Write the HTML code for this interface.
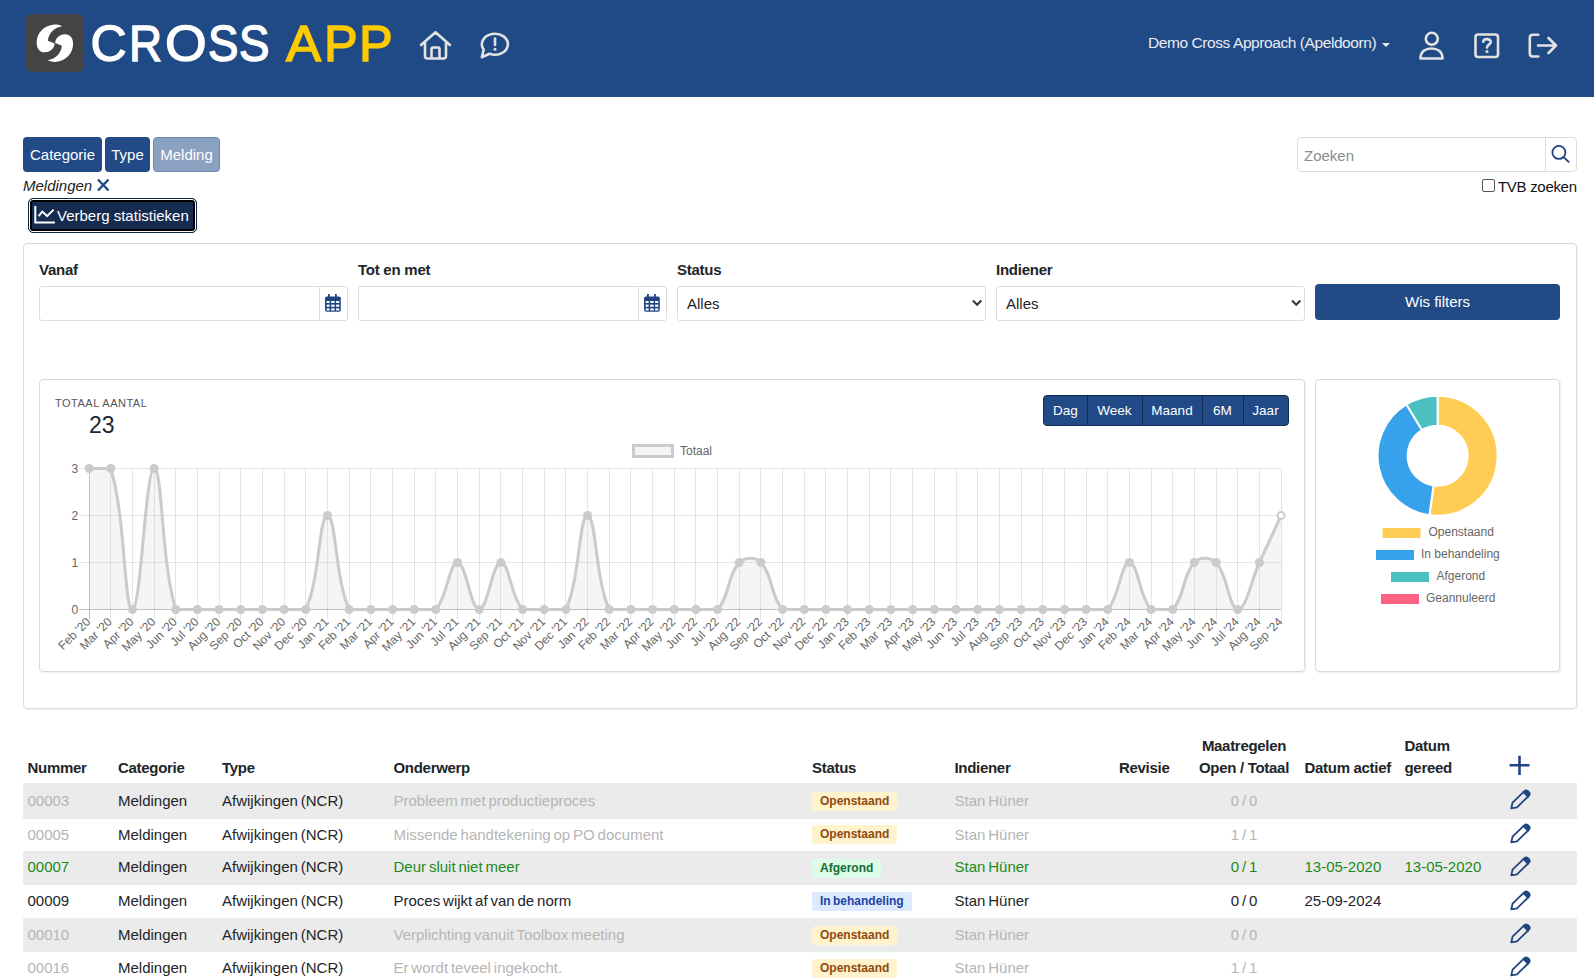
<!DOCTYPE html>
<html><head><meta charset="utf-8">
<style>
*{box-sizing:border-box}
html,body{margin:0;padding:0;width:1594px;height:978px;overflow:hidden;background:#fff;font-family:"Liberation Sans",sans-serif;color:#212529}
.a{position:absolute}
#hdr{left:0;top:0;width:1594px;height:97px;background:#204a85}
#logo{left:26px;top:14px;width:58px;height:58px;background:#444;border-radius:6px}
.brand{top:14px;font-size:50px;line-height:60px;color:#fff;white-space:nowrap;-webkit-text-stroke:1.4px currentColor;transform-origin:0 0}
.hi{stroke:#e2e2e2;fill:none;stroke-width:2.6;stroke-linecap:round;stroke-linejoin:round}
#org{left:1148px;top:33px;letter-spacing:-0.42px;font-size:15.5px;line-height:20px;color:#e8ecf3;white-space:nowrap}
.bc{top:137px;height:35px;border-radius:4px;background:#224a86;color:#fff;font-size:15px;line-height:35px;text-align:center}
#meld{left:23px;top:177px;font-style:italic;font-size:15px;color:#222}
#verberg{left:28px;top:198px;width:169px;height:35px;border-radius:5px;background:#152b4f;border:1px solid #0f2346;box-shadow:inset 0 0 0 1px #fff,inset 0 0 0 3px #000;color:#fff;font-size:15px;line-height:33px}
#search{left:1297px;top:137px;width:280px;height:35px;border:1px solid #dcdcdc;border-radius:4px}
#panel{left:23px;top:243px;width:1554px;height:466px;border:1px solid #dadada;border-radius:4px;box-shadow:1px 1px 2px rgba(0,0,0,0.07)}
.lbl{top:261px;font-size:15px;letter-spacing:-0.25px;font-weight:bold;color:#212529}
.inp{top:286px;height:35px;border:1px solid #dcdcdc;border-radius:3px}
.card{top:379px;height:293px;border:1px solid #dadada;border-radius:4px;box-shadow:1px 1px 2px rgba(0,0,0,0.08)}
#tab{left:23px;top:720px;width:1554px}
.th{font-weight:bold;font-size:15px;letter-spacing:-0.3px;color:#212529;white-space:nowrap}
.row{left:23px;width:1554px}
.td{font-size:15px;white-space:nowrap;word-spacing:-1.3px}
.badge{word-spacing:-1px;font-size:12px;font-weight:bold;height:19px;line-height:19px;border-radius:3px;padding:0 8px}
.b-o{background:#fff3cd;color:#8f4a10}
.b-a{background:#dcfce7;color:#156c3a}
.b-i{background:#dbeafe;color:#1e43a6}
.gray{color:#b5b5b5}
.green{color:#1b8a1b}
.sg{top:0;height:29px;line-height:29px;text-align:center;color:#fff;font-size:13.5px}
</style></head><body>
<div id="hdr" class="a"></div>
<div id="logo" class="a">
<svg width="58" height="58" viewBox="0 0 58 58"><path fill="#fff" d="M36.2,12.2 C33,10.8 30,10.5 28.5,10.6 C17,11.5 10.5,20 10.7,29 C10.8,35 14,38.5 19,38.3 C24.5,38 28.5,34 28.6,29.5 L21.9,26.7 C22.5,19.5 28,13.5 36.2,12.2 Z"/><path fill="#fff" transform="rotate(180 28.9 29.25)" d="M36.2,12.2 C33,10.8 30,10.5 28.5,10.6 C17,11.5 10.5,20 10.7,29 C10.8,35 14,38.5 19,38.3 C24.5,38 28.5,34 28.6,29.5 L21.9,26.7 C22.5,19.5 28,13.5 36.2,12.2 Z"/></svg></div>
<div class="a brand" style="left:90.50px;color:#fff;transform:scaleX(1.000)">C</div><div class="a brand" style="left:129.25px;color:#fff;transform:scaleX(0.916)">R</div><div class="a brand" style="left:164.56px;color:#fff;transform:scaleX(1.071)">O</div><div class="a brand" style="left:207.77px;color:#fff;transform:scaleX(0.913)">S</div><div class="a brand" style="left:239.37px;color:#fff;transform:scaleX(0.913)">S</div><div class="a brand" style="left:286.35px;color:#fecb00;transform:scaleX(1.054)">A</div><div class="a brand" style="left:323.97px;color:#fecb00;transform:scaleX(1.011)">P</div><div class="a brand" style="left:358.97px;color:#fecb00;transform:scaleX(1.011)">P</div>
<svg class="a" style="left:0;top:0" width="1594" height="97">
 <!-- home -->
 <path class="hi" d="M421,45 L435.5,32.3 L450,45 M425,42 V56 Q425,58.5 427.5,58.5 H443.5 Q446,58.5 446,56 V42 M431.5,58.5 V49 Q431.5,47.5 433,47.5 H438 Q439.5,47.5 439.5,49 V58.5"/>
 <!-- chat -->
 <path class="hi" d="M483.7,49.6 A13,10.5 0 1 1 489.5,53.8 L481.8,57.2 Z"/>
 <path class="hi" d="M495,38.5 V45" />
 <circle cx="495" cy="49.3" r="1.5" fill="#e2e2e2"/>
</svg>
<div id="org" class="a">Demo Cross Approach (Apeldoorn)</div>
<svg class="a" style="left:0;top:0" width="1594" height="97">
 <path d="M1382,43 L1390,43 L1386,47 Z" fill="#e8ecf3"/>
 <!-- user -->
 <circle class="hi" cx="1431.8" cy="38.8" r="6"/>
 <path class="hi" d="M1420.5,58.5 C1420.5,51.5 1425.5,48.5 1431.5,48.5 C1437.5,48.5 1442.5,51.5 1442.5,58.5 Z"/>
 <!-- help -->
 <rect class="hi" x="1475.5" y="34.5" width="22.5" height="22.5" rx="2.5"/>
 <path class="hi" d="M1483.3,41.8 C1483.3,38.5 1490.8,38 1490.8,42 C1490.8,44.5 1487,44.8 1487,47.5"/>
 <circle cx="1487" cy="51.5" r="1.5" fill="#e2e2e2"/>
 <!-- logout -->
 <path class="hi" d="M1538.3,34.8 H1532.8 Q1529.8,34.8 1529.8,37.8 V53.5 Q1529.8,56.5 1532.8,56.5 H1538.3 M1538,45.5 H1555.5 M1548.5,38 L1556,45.5 L1548.5,53"/>
</svg>

<div class="a bc" style="left:23px;width:79px">Categorie</div>
<div class="a bc" style="left:105px;width:45px">Type</div>
<div class="a bc" style="left:153px;width:67px;background:#8ba1c1;border:1px solid #6b88b4;line-height:33px">Melding</div>
<div id="meld" class="a">Meldingen</div>
<svg class="a" style="left:96px;top:178px" width="14" height="14"><path d="M2,1.5 L12.5,12.5 M12.5,1.5 L2,12.5" stroke="#224a86" stroke-width="2.4"/></svg>
<div id="verberg" class="a"><svg class="a" style="left:5px;top:7px" width="24" height="20"><path d="M1.3,0 V16.4 H20.9 M4.6,10.1 L8.3,5.6 L13.1,10.1 L19.6,3.6" stroke="#fff" stroke-width="2" fill="none"/></svg><span class="a" style="left:28px;top:0">Verberg statistieken</span></div>

<div id="search" class="a"><span class="a" style="left:6px;top:9px;font-size:15px;color:#8a8a8a">Zoeken</span><div class="a" style="left:247px;top:0;width:1px;height:33px;background:#dcdcdc"></div>
<svg class="a" style="left:253px;top:7px" width="22" height="22"><circle cx="7.9" cy="7.4" r="6.5" stroke="#1f4580" stroke-width="1.8" fill="none"/><path d="M12.6,12.1 L18.2,17.4" stroke="#1f4580" stroke-width="1.9"/></svg></div>
<div class="a" style="left:1482px;top:179px;width:13px;height:13px;border:1px solid #555;border-radius:2px"></div>
<div class="a" style="left:1498px;top:178px;font-size:15px;letter-spacing:-0.3px;color:#111">TVB zoeken</div>

<div id="panel" class="a"></div>
<div class="a lbl" style="left:39px">Vanaf</div>
<div class="a lbl" style="left:358px">Tot en met</div>
<div class="a lbl" style="left:677px">Status</div>
<div class="a lbl" style="left:996px">Indiener</div>
<div class="a inp" style="left:39px;width:309px"><div class="a" style="left:278.5px;top:0;width:1px;height:33px;background:#dcdcdc"></div><svg class="a" style="left:284px;top:6px" width="18" height="20"><rect x="1" y="3.5" width="15.8" height="15.3" rx="1.8" fill="#1f4580"/><rect x="4" y="1" width="1.8" height="4" fill="#1f4580"/><rect x="11" y="1" width="1.8" height="4" fill="#1f4580"/><g fill="#fff"><rect x="2.6" y="8" width="3" height="2"/><rect x="7.2" y="8" width="3.4" height="2"/><rect x="12.1" y="8" width="3.2" height="2"/><rect x="2.6" y="11.6" width="3" height="2.2"/><rect x="7.2" y="11.6" width="3.4" height="2.2"/><rect x="12.1" y="11.6" width="3.2" height="2.2"/><rect x="2.6" y="15.4" width="3" height="2.1"/><rect x="7.2" y="15.4" width="3.4" height="2.1"/><rect x="12.1" y="15.4" width="3.2" height="2.1"/></g></svg></div>
<div class="a inp" style="left:358px;width:309px"><div class="a" style="left:278.5px;top:0;width:1px;height:33px;background:#dcdcdc"></div><svg class="a" style="left:284px;top:6px" width="18" height="20"><rect x="1" y="3.5" width="15.8" height="15.3" rx="1.8" fill="#1f4580"/><rect x="4" y="1" width="1.8" height="4" fill="#1f4580"/><rect x="11" y="1" width="1.8" height="4" fill="#1f4580"/><g fill="#fff"><rect x="2.6" y="8" width="3" height="2"/><rect x="7.2" y="8" width="3.4" height="2"/><rect x="12.1" y="8" width="3.2" height="2"/><rect x="2.6" y="11.6" width="3" height="2.2"/><rect x="7.2" y="11.6" width="3.4" height="2.2"/><rect x="12.1" y="11.6" width="3.2" height="2.2"/><rect x="2.6" y="15.4" width="3" height="2.1"/><rect x="7.2" y="15.4" width="3.4" height="2.1"/><rect x="12.1" y="15.4" width="3.2" height="2.1"/></g></svg></div>
<div class="a inp" style="left:677px;width:309px"><span class="a" style="left:9px;top:8px;font-size:15px;color:#212529">Alles</span><svg class="a" style="left:292px;top:11px" width="14" height="10"><path d="M3,2.5 L7.2,6.8 L11.4,2.5" stroke="#343a40" stroke-width="2" fill="none"/></svg></div>
<div class="a inp" style="left:996px;width:309px"><span class="a" style="left:9px;top:8px;font-size:15px;color:#212529">Alles</span><svg class="a" style="left:292px;top:11px" width="14" height="10"><path d="M3,2.5 L7.2,6.8 L11.4,2.5" stroke="#343a40" stroke-width="2" fill="none"/></svg></div>
<div class="a" style="left:1315px;top:284px;width:245px;height:36px;background:#224a86;border-radius:4px;color:#fff;font-size:15px;line-height:36px;text-align:center">Wis filters</div>

<div class="a card" style="left:39px;width:1266px"></div>
<div class="a card" style="left:1315px;width:245px"></div>
<div class="a" style="left:55px;top:397px;font-size:11px;letter-spacing:0.5px;color:#555">TOTAAL AANTAL</div>
<div class="a" style="left:89px;top:412px;font-size:23px;color:#1e2533">23</div>
<div class="a" style="left:1043px;top:395px;width:246px;height:31px;background:#224a86;border:1px solid #102c55;border-radius:4px;overflow:hidden">
<div class="a" style="left:42.5px;top:0;width:1px;height:29px;background:#102c55"></div>
<div class="a" style="left:97.5px;top:0;width:1px;height:29px;background:#102c55"></div>
<div class="a" style="left:157.5px;top:0;width:1px;height:29px;background:#102c55"></div>
<div class="a" style="left:198.5px;top:0;width:1px;height:29px;background:#102c55"></div>
<span class="a sg" style="left:0;width:43px">Dag</span>
<span class="a sg" style="left:43px;width:55px">Week</span>
<span class="a sg" style="left:98px;width:60px">Maand</span>
<span class="a sg" style="left:158px;width:41px">6M</span>
<span class="a sg" style="left:199px;width:45px">Jaar</span>
</div>
<svg id="lc" width="1594" height="978" style="position:absolute;left:0;top:0">
<line x1="89.5" y1="468.5" x2="89.5" y2="619.5" stroke="rgba(0,0,0,0.25)" stroke-width="1"/>
<line x1="110.5" y1="468.5" x2="110.5" y2="619.5" stroke="rgba(0,0,0,0.1)" stroke-width="1"/>
<line x1="132.5" y1="468.5" x2="132.5" y2="619.5" stroke="rgba(0,0,0,0.1)" stroke-width="1"/>
<line x1="154.5" y1="468.5" x2="154.5" y2="619.5" stroke="rgba(0,0,0,0.1)" stroke-width="1"/>
<line x1="175.5" y1="468.5" x2="175.5" y2="619.5" stroke="rgba(0,0,0,0.1)" stroke-width="1"/>
<line x1="197.5" y1="468.5" x2="197.5" y2="619.5" stroke="rgba(0,0,0,0.1)" stroke-width="1"/>
<line x1="219.5" y1="468.5" x2="219.5" y2="619.5" stroke="rgba(0,0,0,0.1)" stroke-width="1"/>
<line x1="240.5" y1="468.5" x2="240.5" y2="619.5" stroke="rgba(0,0,0,0.1)" stroke-width="1"/>
<line x1="262.5" y1="468.5" x2="262.5" y2="619.5" stroke="rgba(0,0,0,0.1)" stroke-width="1"/>
<line x1="284.5" y1="468.5" x2="284.5" y2="619.5" stroke="rgba(0,0,0,0.1)" stroke-width="1"/>
<line x1="305.5" y1="468.5" x2="305.5" y2="619.5" stroke="rgba(0,0,0,0.1)" stroke-width="1"/>
<line x1="327.5" y1="468.5" x2="327.5" y2="619.5" stroke="rgba(0,0,0,0.1)" stroke-width="1"/>
<line x1="349.5" y1="468.5" x2="349.5" y2="619.5" stroke="rgba(0,0,0,0.1)" stroke-width="1"/>
<line x1="370.5" y1="468.5" x2="370.5" y2="619.5" stroke="rgba(0,0,0,0.1)" stroke-width="1"/>
<line x1="392.5" y1="468.5" x2="392.5" y2="619.5" stroke="rgba(0,0,0,0.1)" stroke-width="1"/>
<line x1="414.5" y1="468.5" x2="414.5" y2="619.5" stroke="rgba(0,0,0,0.1)" stroke-width="1"/>
<line x1="435.5" y1="468.5" x2="435.5" y2="619.5" stroke="rgba(0,0,0,0.1)" stroke-width="1"/>
<line x1="457.5" y1="468.5" x2="457.5" y2="619.5" stroke="rgba(0,0,0,0.1)" stroke-width="1"/>
<line x1="479.5" y1="468.5" x2="479.5" y2="619.5" stroke="rgba(0,0,0,0.1)" stroke-width="1"/>
<line x1="500.5" y1="468.5" x2="500.5" y2="619.5" stroke="rgba(0,0,0,0.1)" stroke-width="1"/>
<line x1="522.5" y1="468.5" x2="522.5" y2="619.5" stroke="rgba(0,0,0,0.1)" stroke-width="1"/>
<line x1="544.5" y1="468.5" x2="544.5" y2="619.5" stroke="rgba(0,0,0,0.1)" stroke-width="1"/>
<line x1="565.5" y1="468.5" x2="565.5" y2="619.5" stroke="rgba(0,0,0,0.1)" stroke-width="1"/>
<line x1="587.5" y1="468.5" x2="587.5" y2="619.5" stroke="rgba(0,0,0,0.1)" stroke-width="1"/>
<line x1="609.5" y1="468.5" x2="609.5" y2="619.5" stroke="rgba(0,0,0,0.1)" stroke-width="1"/>
<line x1="630.5" y1="468.5" x2="630.5" y2="619.5" stroke="rgba(0,0,0,0.1)" stroke-width="1"/>
<line x1="652.5" y1="468.5" x2="652.5" y2="619.5" stroke="rgba(0,0,0,0.1)" stroke-width="1"/>
<line x1="674.5" y1="468.5" x2="674.5" y2="619.5" stroke="rgba(0,0,0,0.1)" stroke-width="1"/>
<line x1="695.5" y1="468.5" x2="695.5" y2="619.5" stroke="rgba(0,0,0,0.1)" stroke-width="1"/>
<line x1="717.5" y1="468.5" x2="717.5" y2="619.5" stroke="rgba(0,0,0,0.1)" stroke-width="1"/>
<line x1="739.5" y1="468.5" x2="739.5" y2="619.5" stroke="rgba(0,0,0,0.1)" stroke-width="1"/>
<line x1="760.5" y1="468.5" x2="760.5" y2="619.5" stroke="rgba(0,0,0,0.1)" stroke-width="1"/>
<line x1="782.5" y1="468.5" x2="782.5" y2="619.5" stroke="rgba(0,0,0,0.1)" stroke-width="1"/>
<line x1="804.5" y1="468.5" x2="804.5" y2="619.5" stroke="rgba(0,0,0,0.1)" stroke-width="1"/>
<line x1="825.5" y1="468.5" x2="825.5" y2="619.5" stroke="rgba(0,0,0,0.1)" stroke-width="1"/>
<line x1="847.5" y1="468.5" x2="847.5" y2="619.5" stroke="rgba(0,0,0,0.1)" stroke-width="1"/>
<line x1="869.5" y1="468.5" x2="869.5" y2="619.5" stroke="rgba(0,0,0,0.1)" stroke-width="1"/>
<line x1="890.5" y1="468.5" x2="890.5" y2="619.5" stroke="rgba(0,0,0,0.1)" stroke-width="1"/>
<line x1="912.5" y1="468.5" x2="912.5" y2="619.5" stroke="rgba(0,0,0,0.1)" stroke-width="1"/>
<line x1="934.5" y1="468.5" x2="934.5" y2="619.5" stroke="rgba(0,0,0,0.1)" stroke-width="1"/>
<line x1="956.5" y1="468.5" x2="956.5" y2="619.5" stroke="rgba(0,0,0,0.1)" stroke-width="1"/>
<line x1="977.5" y1="468.5" x2="977.5" y2="619.5" stroke="rgba(0,0,0,0.1)" stroke-width="1"/>
<line x1="999.5" y1="468.5" x2="999.5" y2="619.5" stroke="rgba(0,0,0,0.1)" stroke-width="1"/>
<line x1="1021.5" y1="468.5" x2="1021.5" y2="619.5" stroke="rgba(0,0,0,0.1)" stroke-width="1"/>
<line x1="1042.5" y1="468.5" x2="1042.5" y2="619.5" stroke="rgba(0,0,0,0.1)" stroke-width="1"/>
<line x1="1064.5" y1="468.5" x2="1064.5" y2="619.5" stroke="rgba(0,0,0,0.1)" stroke-width="1"/>
<line x1="1086.5" y1="468.5" x2="1086.5" y2="619.5" stroke="rgba(0,0,0,0.1)" stroke-width="1"/>
<line x1="1107.5" y1="468.5" x2="1107.5" y2="619.5" stroke="rgba(0,0,0,0.1)" stroke-width="1"/>
<line x1="1129.5" y1="468.5" x2="1129.5" y2="619.5" stroke="rgba(0,0,0,0.1)" stroke-width="1"/>
<line x1="1151.5" y1="468.5" x2="1151.5" y2="619.5" stroke="rgba(0,0,0,0.1)" stroke-width="1"/>
<line x1="1172.5" y1="468.5" x2="1172.5" y2="619.5" stroke="rgba(0,0,0,0.1)" stroke-width="1"/>
<line x1="1194.5" y1="468.5" x2="1194.5" y2="619.5" stroke="rgba(0,0,0,0.1)" stroke-width="1"/>
<line x1="1216.5" y1="468.5" x2="1216.5" y2="619.5" stroke="rgba(0,0,0,0.1)" stroke-width="1"/>
<line x1="1237.5" y1="468.5" x2="1237.5" y2="619.5" stroke="rgba(0,0,0,0.1)" stroke-width="1"/>
<line x1="1259.5" y1="468.5" x2="1259.5" y2="619.5" stroke="rgba(0,0,0,0.1)" stroke-width="1"/>
<line x1="1281.5" y1="468.5" x2="1281.5" y2="619.5" stroke="rgba(0,0,0,0.1)" stroke-width="1"/>
<line x1="79.1" y1="609.5" x2="1281.1" y2="609.5" stroke="rgba(0,0,0,0.25)" stroke-width="1"/>
<line x1="79.1" y1="562.5" x2="1281.1" y2="562.5" stroke="rgba(0,0,0,0.1)" stroke-width="1"/>
<line x1="79.1" y1="515.5" x2="1281.1" y2="515.5" stroke="rgba(0,0,0,0.1)" stroke-width="1"/>
<line x1="79.1" y1="468.5" x2="1281.1" y2="468.5" stroke="rgba(0,0,0,0.1)" stroke-width="1"/>
<path d="M89.10,468.50 C97.77,468.50 108.49,468.50 110.77,468.50 C125.82,517.46 123.78,609.50 132.45,609.50 C141.11,609.50 145.45,468.50 154.12,468.50 C162.79,468.50 160.74,560.54 175.79,609.50 C178.08,609.50 188.79,609.50 197.46,609.50 C206.13,609.50 210.47,609.50 219.14,609.50 C227.81,609.50 232.14,609.50 240.81,609.50 C249.48,609.50 253.81,609.50 262.48,609.50 C271.15,609.50 275.49,609.50 284.15,609.50 C292.82,609.50 302.65,609.50 305.83,609.50 C319.98,578.80 318.83,515.50 327.50,515.50 C336.17,515.50 335.02,578.80 349.17,609.50 C352.35,609.50 362.18,609.50 370.85,609.50 C379.51,609.50 383.85,609.50 392.52,609.50 C401.19,609.50 405.52,609.50 414.19,609.50 C422.86,609.50 430.75,609.50 435.86,609.50 C448.08,596.25 448.87,562.50 457.54,562.50 C466.21,562.50 470.54,609.50 479.21,609.50 C487.88,609.50 492.21,562.50 500.88,562.50 C509.55,562.50 510.33,596.25 522.55,609.50 C527.67,609.50 535.56,609.50 544.23,609.50 C552.90,609.50 562.72,609.50 565.90,609.50 C580.06,578.80 578.90,515.50 587.57,515.50 C596.24,515.50 595.09,578.80 609.25,609.50 C612.43,609.50 622.25,609.50 630.92,609.50 C639.59,609.50 643.92,609.50 652.59,609.50 C661.26,609.50 665.59,609.50 674.26,609.50 C682.93,609.50 687.27,609.50 695.94,609.50 C704.61,609.50 712.49,609.50 717.61,609.50 C729.83,596.25 727.06,575.75 739.28,562.50 C744.40,556.95 755.84,556.95 760.95,562.50 C773.18,575.75 770.41,596.25 782.63,609.50 C787.74,609.50 795.63,609.50 804.30,609.50 C812.97,609.50 817.30,609.50 825.97,609.50 C834.64,609.50 838.98,609.50 847.65,609.50 C856.31,609.50 860.65,609.50 869.32,609.50 C877.99,609.50 882.32,609.50 890.99,609.50 C899.66,609.50 903.99,609.50 912.66,609.50 C921.33,609.50 925.67,609.50 934.34,609.50 C943.01,609.50 947.34,609.50 956.01,609.50 C964.68,609.50 969.01,609.50 977.68,609.50 C986.35,609.50 990.69,609.50 999.35,609.50 C1008.02,609.50 1012.36,609.50 1021.03,609.50 C1029.70,609.50 1034.03,609.50 1042.70,609.50 C1051.37,609.50 1055.70,609.50 1064.37,609.50 C1073.04,609.50 1077.38,609.50 1086.05,609.50 C1094.71,609.50 1102.60,609.50 1107.72,609.50 C1119.94,596.25 1120.72,562.50 1129.39,562.50 C1138.06,562.50 1138.84,596.25 1151.06,609.50 C1156.18,609.50 1167.62,609.50 1172.74,609.50 C1184.96,596.25 1182.19,575.75 1194.41,562.50 C1199.53,556.95 1210.96,556.95 1216.08,562.50 C1228.30,575.75 1229.09,609.50 1237.75,609.50 C1246.42,609.50 1250.76,581.30 1259.43,562.50 C1268.10,543.70 1272.43,534.30 1281.10,515.50 L1281.10,609.5 L89.10,609.5 Z" fill="rgba(201,203,207,0.2)"/>
<path d="M89.10,468.50 C97.77,468.50 108.49,468.50 110.77,468.50 C125.82,517.46 123.78,609.50 132.45,609.50 C141.11,609.50 145.45,468.50 154.12,468.50 C162.79,468.50 160.74,560.54 175.79,609.50 C178.08,609.50 188.79,609.50 197.46,609.50 C206.13,609.50 210.47,609.50 219.14,609.50 C227.81,609.50 232.14,609.50 240.81,609.50 C249.48,609.50 253.81,609.50 262.48,609.50 C271.15,609.50 275.49,609.50 284.15,609.50 C292.82,609.50 302.65,609.50 305.83,609.50 C319.98,578.80 318.83,515.50 327.50,515.50 C336.17,515.50 335.02,578.80 349.17,609.50 C352.35,609.50 362.18,609.50 370.85,609.50 C379.51,609.50 383.85,609.50 392.52,609.50 C401.19,609.50 405.52,609.50 414.19,609.50 C422.86,609.50 430.75,609.50 435.86,609.50 C448.08,596.25 448.87,562.50 457.54,562.50 C466.21,562.50 470.54,609.50 479.21,609.50 C487.88,609.50 492.21,562.50 500.88,562.50 C509.55,562.50 510.33,596.25 522.55,609.50 C527.67,609.50 535.56,609.50 544.23,609.50 C552.90,609.50 562.72,609.50 565.90,609.50 C580.06,578.80 578.90,515.50 587.57,515.50 C596.24,515.50 595.09,578.80 609.25,609.50 C612.43,609.50 622.25,609.50 630.92,609.50 C639.59,609.50 643.92,609.50 652.59,609.50 C661.26,609.50 665.59,609.50 674.26,609.50 C682.93,609.50 687.27,609.50 695.94,609.50 C704.61,609.50 712.49,609.50 717.61,609.50 C729.83,596.25 727.06,575.75 739.28,562.50 C744.40,556.95 755.84,556.95 760.95,562.50 C773.18,575.75 770.41,596.25 782.63,609.50 C787.74,609.50 795.63,609.50 804.30,609.50 C812.97,609.50 817.30,609.50 825.97,609.50 C834.64,609.50 838.98,609.50 847.65,609.50 C856.31,609.50 860.65,609.50 869.32,609.50 C877.99,609.50 882.32,609.50 890.99,609.50 C899.66,609.50 903.99,609.50 912.66,609.50 C921.33,609.50 925.67,609.50 934.34,609.50 C943.01,609.50 947.34,609.50 956.01,609.50 C964.68,609.50 969.01,609.50 977.68,609.50 C986.35,609.50 990.69,609.50 999.35,609.50 C1008.02,609.50 1012.36,609.50 1021.03,609.50 C1029.70,609.50 1034.03,609.50 1042.70,609.50 C1051.37,609.50 1055.70,609.50 1064.37,609.50 C1073.04,609.50 1077.38,609.50 1086.05,609.50 C1094.71,609.50 1102.60,609.50 1107.72,609.50 C1119.94,596.25 1120.72,562.50 1129.39,562.50 C1138.06,562.50 1138.84,596.25 1151.06,609.50 C1156.18,609.50 1167.62,609.50 1172.74,609.50 C1184.96,596.25 1182.19,575.75 1194.41,562.50 C1199.53,556.95 1210.96,556.95 1216.08,562.50 C1228.30,575.75 1229.09,609.50 1237.75,609.50 C1246.42,609.50 1250.76,581.30 1259.43,562.50 C1268.10,543.70 1272.43,534.30 1281.10,515.50" fill="none" stroke="#c9cbcf" stroke-width="3"/>
<circle cx="89.10" cy="468.50" r="4.5" fill="#c9cbcf"/>
<circle cx="110.77" cy="468.50" r="4.5" fill="#c9cbcf"/>
<circle cx="132.45" cy="609.50" r="4.5" fill="#c9cbcf"/>
<circle cx="154.12" cy="468.50" r="4.5" fill="#c9cbcf"/>
<circle cx="175.79" cy="609.50" r="4.5" fill="#c9cbcf"/>
<circle cx="197.46" cy="609.50" r="4.5" fill="#c9cbcf"/>
<circle cx="219.14" cy="609.50" r="4.5" fill="#c9cbcf"/>
<circle cx="240.81" cy="609.50" r="4.5" fill="#c9cbcf"/>
<circle cx="262.48" cy="609.50" r="4.5" fill="#c9cbcf"/>
<circle cx="284.15" cy="609.50" r="4.5" fill="#c9cbcf"/>
<circle cx="305.83" cy="609.50" r="4.5" fill="#c9cbcf"/>
<circle cx="327.50" cy="515.50" r="4.5" fill="#c9cbcf"/>
<circle cx="349.17" cy="609.50" r="4.5" fill="#c9cbcf"/>
<circle cx="370.85" cy="609.50" r="4.5" fill="#c9cbcf"/>
<circle cx="392.52" cy="609.50" r="4.5" fill="#c9cbcf"/>
<circle cx="414.19" cy="609.50" r="4.5" fill="#c9cbcf"/>
<circle cx="435.86" cy="609.50" r="4.5" fill="#c9cbcf"/>
<circle cx="457.54" cy="562.50" r="4.5" fill="#c9cbcf"/>
<circle cx="479.21" cy="609.50" r="4.5" fill="#c9cbcf"/>
<circle cx="500.88" cy="562.50" r="4.5" fill="#c9cbcf"/>
<circle cx="522.55" cy="609.50" r="4.5" fill="#c9cbcf"/>
<circle cx="544.23" cy="609.50" r="4.5" fill="#c9cbcf"/>
<circle cx="565.90" cy="609.50" r="4.5" fill="#c9cbcf"/>
<circle cx="587.57" cy="515.50" r="4.5" fill="#c9cbcf"/>
<circle cx="609.25" cy="609.50" r="4.5" fill="#c9cbcf"/>
<circle cx="630.92" cy="609.50" r="4.5" fill="#c9cbcf"/>
<circle cx="652.59" cy="609.50" r="4.5" fill="#c9cbcf"/>
<circle cx="674.26" cy="609.50" r="4.5" fill="#c9cbcf"/>
<circle cx="695.94" cy="609.50" r="4.5" fill="#c9cbcf"/>
<circle cx="717.61" cy="609.50" r="4.5" fill="#c9cbcf"/>
<circle cx="739.28" cy="562.50" r="4.5" fill="#c9cbcf"/>
<circle cx="760.95" cy="562.50" r="4.5" fill="#c9cbcf"/>
<circle cx="782.63" cy="609.50" r="4.5" fill="#c9cbcf"/>
<circle cx="804.30" cy="609.50" r="4.5" fill="#c9cbcf"/>
<circle cx="825.97" cy="609.50" r="4.5" fill="#c9cbcf"/>
<circle cx="847.65" cy="609.50" r="4.5" fill="#c9cbcf"/>
<circle cx="869.32" cy="609.50" r="4.5" fill="#c9cbcf"/>
<circle cx="890.99" cy="609.50" r="4.5" fill="#c9cbcf"/>
<circle cx="912.66" cy="609.50" r="4.5" fill="#c9cbcf"/>
<circle cx="934.34" cy="609.50" r="4.5" fill="#c9cbcf"/>
<circle cx="956.01" cy="609.50" r="4.5" fill="#c9cbcf"/>
<circle cx="977.68" cy="609.50" r="4.5" fill="#c9cbcf"/>
<circle cx="999.35" cy="609.50" r="4.5" fill="#c9cbcf"/>
<circle cx="1021.03" cy="609.50" r="4.5" fill="#c9cbcf"/>
<circle cx="1042.70" cy="609.50" r="4.5" fill="#c9cbcf"/>
<circle cx="1064.37" cy="609.50" r="4.5" fill="#c9cbcf"/>
<circle cx="1086.05" cy="609.50" r="4.5" fill="#c9cbcf"/>
<circle cx="1107.72" cy="609.50" r="4.5" fill="#c9cbcf"/>
<circle cx="1129.39" cy="562.50" r="4.5" fill="#c9cbcf"/>
<circle cx="1151.06" cy="609.50" r="4.5" fill="#c9cbcf"/>
<circle cx="1172.74" cy="609.50" r="4.5" fill="#c9cbcf"/>
<circle cx="1194.41" cy="562.50" r="4.5" fill="#c9cbcf"/>
<circle cx="1216.08" cy="562.50" r="4.5" fill="#c9cbcf"/>
<circle cx="1237.75" cy="609.50" r="4.5" fill="#c9cbcf"/>
<circle cx="1259.43" cy="562.50" r="4.5" fill="#c9cbcf"/>
<circle cx="1281.10" cy="515.50" r="3.5" fill="#fff" stroke="#c9cbcf" stroke-width="2"/>
<text x="78.1" y="614.0" text-anchor="end" font-family="Liberation Sans" font-size="12" fill="#666">0</text>
<text x="78.1" y="567.0" text-anchor="end" font-family="Liberation Sans" font-size="12" fill="#666">1</text>
<text x="78.1" y="520.0" text-anchor="end" font-family="Liberation Sans" font-size="12" fill="#666">2</text>
<text x="78.1" y="473.0" text-anchor="end" font-family="Liberation Sans" font-size="12" fill="#666">3</text>
<text transform="translate(91.10,622.5) rotate(-45)" text-anchor="end" font-family="Liberation Sans" font-size="12" fill="#666">Feb &#39;20</text>
<text transform="translate(112.77,622.5) rotate(-45)" text-anchor="end" font-family="Liberation Sans" font-size="12" fill="#666">Mar &#39;20</text>
<text transform="translate(134.45,622.5) rotate(-45)" text-anchor="end" font-family="Liberation Sans" font-size="12" fill="#666">Apr &#39;20</text>
<text transform="translate(156.12,622.5) rotate(-45)" text-anchor="end" font-family="Liberation Sans" font-size="12" fill="#666">May &#39;20</text>
<text transform="translate(177.79,622.5) rotate(-45)" text-anchor="end" font-family="Liberation Sans" font-size="12" fill="#666">Jun &#39;20</text>
<text transform="translate(199.46,622.5) rotate(-45)" text-anchor="end" font-family="Liberation Sans" font-size="12" fill="#666">Jul &#39;20</text>
<text transform="translate(221.14,622.5) rotate(-45)" text-anchor="end" font-family="Liberation Sans" font-size="12" fill="#666">Aug &#39;20</text>
<text transform="translate(242.81,622.5) rotate(-45)" text-anchor="end" font-family="Liberation Sans" font-size="12" fill="#666">Sep &#39;20</text>
<text transform="translate(264.48,622.5) rotate(-45)" text-anchor="end" font-family="Liberation Sans" font-size="12" fill="#666">Oct &#39;20</text>
<text transform="translate(286.15,622.5) rotate(-45)" text-anchor="end" font-family="Liberation Sans" font-size="12" fill="#666">Nov &#39;20</text>
<text transform="translate(307.83,622.5) rotate(-45)" text-anchor="end" font-family="Liberation Sans" font-size="12" fill="#666">Dec &#39;20</text>
<text transform="translate(329.50,622.5) rotate(-45)" text-anchor="end" font-family="Liberation Sans" font-size="12" fill="#666">Jan &#39;21</text>
<text transform="translate(351.17,622.5) rotate(-45)" text-anchor="end" font-family="Liberation Sans" font-size="12" fill="#666">Feb &#39;21</text>
<text transform="translate(372.85,622.5) rotate(-45)" text-anchor="end" font-family="Liberation Sans" font-size="12" fill="#666">Mar &#39;21</text>
<text transform="translate(394.52,622.5) rotate(-45)" text-anchor="end" font-family="Liberation Sans" font-size="12" fill="#666">Apr &#39;21</text>
<text transform="translate(416.19,622.5) rotate(-45)" text-anchor="end" font-family="Liberation Sans" font-size="12" fill="#666">May &#39;21</text>
<text transform="translate(437.86,622.5) rotate(-45)" text-anchor="end" font-family="Liberation Sans" font-size="12" fill="#666">Jun &#39;21</text>
<text transform="translate(459.54,622.5) rotate(-45)" text-anchor="end" font-family="Liberation Sans" font-size="12" fill="#666">Jul &#39;21</text>
<text transform="translate(481.21,622.5) rotate(-45)" text-anchor="end" font-family="Liberation Sans" font-size="12" fill="#666">Aug &#39;21</text>
<text transform="translate(502.88,622.5) rotate(-45)" text-anchor="end" font-family="Liberation Sans" font-size="12" fill="#666">Sep &#39;21</text>
<text transform="translate(524.55,622.5) rotate(-45)" text-anchor="end" font-family="Liberation Sans" font-size="12" fill="#666">Oct &#39;21</text>
<text transform="translate(546.23,622.5) rotate(-45)" text-anchor="end" font-family="Liberation Sans" font-size="12" fill="#666">Nov &#39;21</text>
<text transform="translate(567.90,622.5) rotate(-45)" text-anchor="end" font-family="Liberation Sans" font-size="12" fill="#666">Dec &#39;21</text>
<text transform="translate(589.57,622.5) rotate(-45)" text-anchor="end" font-family="Liberation Sans" font-size="12" fill="#666">Jan &#39;22</text>
<text transform="translate(611.25,622.5) rotate(-45)" text-anchor="end" font-family="Liberation Sans" font-size="12" fill="#666">Feb &#39;22</text>
<text transform="translate(632.92,622.5) rotate(-45)" text-anchor="end" font-family="Liberation Sans" font-size="12" fill="#666">Mar &#39;22</text>
<text transform="translate(654.59,622.5) rotate(-45)" text-anchor="end" font-family="Liberation Sans" font-size="12" fill="#666">Apr &#39;22</text>
<text transform="translate(676.26,622.5) rotate(-45)" text-anchor="end" font-family="Liberation Sans" font-size="12" fill="#666">May &#39;22</text>
<text transform="translate(697.94,622.5) rotate(-45)" text-anchor="end" font-family="Liberation Sans" font-size="12" fill="#666">Jun &#39;22</text>
<text transform="translate(719.61,622.5) rotate(-45)" text-anchor="end" font-family="Liberation Sans" font-size="12" fill="#666">Jul &#39;22</text>
<text transform="translate(741.28,622.5) rotate(-45)" text-anchor="end" font-family="Liberation Sans" font-size="12" fill="#666">Aug &#39;22</text>
<text transform="translate(762.95,622.5) rotate(-45)" text-anchor="end" font-family="Liberation Sans" font-size="12" fill="#666">Sep &#39;22</text>
<text transform="translate(784.63,622.5) rotate(-45)" text-anchor="end" font-family="Liberation Sans" font-size="12" fill="#666">Oct &#39;22</text>
<text transform="translate(806.30,622.5) rotate(-45)" text-anchor="end" font-family="Liberation Sans" font-size="12" fill="#666">Nov &#39;22</text>
<text transform="translate(827.97,622.5) rotate(-45)" text-anchor="end" font-family="Liberation Sans" font-size="12" fill="#666">Dec &#39;22</text>
<text transform="translate(849.65,622.5) rotate(-45)" text-anchor="end" font-family="Liberation Sans" font-size="12" fill="#666">Jan &#39;23</text>
<text transform="translate(871.32,622.5) rotate(-45)" text-anchor="end" font-family="Liberation Sans" font-size="12" fill="#666">Feb &#39;23</text>
<text transform="translate(892.99,622.5) rotate(-45)" text-anchor="end" font-family="Liberation Sans" font-size="12" fill="#666">Mar &#39;23</text>
<text transform="translate(914.66,622.5) rotate(-45)" text-anchor="end" font-family="Liberation Sans" font-size="12" fill="#666">Apr &#39;23</text>
<text transform="translate(936.34,622.5) rotate(-45)" text-anchor="end" font-family="Liberation Sans" font-size="12" fill="#666">May &#39;23</text>
<text transform="translate(958.01,622.5) rotate(-45)" text-anchor="end" font-family="Liberation Sans" font-size="12" fill="#666">Jun &#39;23</text>
<text transform="translate(979.68,622.5) rotate(-45)" text-anchor="end" font-family="Liberation Sans" font-size="12" fill="#666">Jul &#39;23</text>
<text transform="translate(1001.35,622.5) rotate(-45)" text-anchor="end" font-family="Liberation Sans" font-size="12" fill="#666">Aug &#39;23</text>
<text transform="translate(1023.03,622.5) rotate(-45)" text-anchor="end" font-family="Liberation Sans" font-size="12" fill="#666">Sep &#39;23</text>
<text transform="translate(1044.70,622.5) rotate(-45)" text-anchor="end" font-family="Liberation Sans" font-size="12" fill="#666">Oct &#39;23</text>
<text transform="translate(1066.37,622.5) rotate(-45)" text-anchor="end" font-family="Liberation Sans" font-size="12" fill="#666">Nov &#39;23</text>
<text transform="translate(1088.05,622.5) rotate(-45)" text-anchor="end" font-family="Liberation Sans" font-size="12" fill="#666">Dec &#39;23</text>
<text transform="translate(1109.72,622.5) rotate(-45)" text-anchor="end" font-family="Liberation Sans" font-size="12" fill="#666">Jan &#39;24</text>
<text transform="translate(1131.39,622.5) rotate(-45)" text-anchor="end" font-family="Liberation Sans" font-size="12" fill="#666">Feb &#39;24</text>
<text transform="translate(1153.06,622.5) rotate(-45)" text-anchor="end" font-family="Liberation Sans" font-size="12" fill="#666">Mar &#39;24</text>
<text transform="translate(1174.74,622.5) rotate(-45)" text-anchor="end" font-family="Liberation Sans" font-size="12" fill="#666">Apr &#39;24</text>
<text transform="translate(1196.41,622.5) rotate(-45)" text-anchor="end" font-family="Liberation Sans" font-size="12" fill="#666">May &#39;24</text>
<text transform="translate(1218.08,622.5) rotate(-45)" text-anchor="end" font-family="Liberation Sans" font-size="12" fill="#666">Jun &#39;24</text>
<text transform="translate(1239.75,622.5) rotate(-45)" text-anchor="end" font-family="Liberation Sans" font-size="12" fill="#666">Jul &#39;24</text>
<text transform="translate(1261.43,622.5) rotate(-45)" text-anchor="end" font-family="Liberation Sans" font-size="12" fill="#666">Aug &#39;24</text>
<text transform="translate(1283.10,622.5) rotate(-45)" text-anchor="end" font-family="Liberation Sans" font-size="12" fill="#666">Sep &#39;24</text>
<rect x="633.5" y="445.5" width="39" height="11" fill="rgba(201,203,207,0.2)" stroke="#c9cbcf" stroke-width="3"/>
<text x="680" y="455" font-family="Liberation Sans" font-size="12" fill="#666">Totaal</text>
<path d="M1437.60,395.70 A60,60 0 1 1 1429.43,515.14 L1433.52,485.42 A30,30 0 1 0 1437.60,425.70 Z" fill="#ffcd56" stroke="#fff" stroke-width="2"/>
<path d="M1429.43,515.14 A60,60 0 0 1 1406.42,404.43 L1422.01,430.07 A30,30 0 0 0 1433.52,485.42 Z" fill="#36a2eb" stroke="#fff" stroke-width="2"/>
<path d="M1406.42,404.43 A60,60 0 0 1 1437.60,395.70 L1437.60,425.70 A30,30 0 0 0 1422.01,430.07 Z" fill="#4bc0c0" stroke="#fff" stroke-width="2"/>
<rect x="1382.5" y="528" width="38" height="10" fill="#ffcd56"/>
<text x="1428.5" y="536" font-family="Liberation Sans" font-size="12" fill="#666">Openstaand</text>
<rect x="1376" y="550" width="38" height="10" fill="#36a2eb"/>
<text x="1421" y="558" font-family="Liberation Sans" font-size="12" fill="#666">In behandeling</text>
<rect x="1391" y="572" width="38" height="10" fill="#4bc0c0"/>
<text x="1436.5" y="580" font-family="Liberation Sans" font-size="12" fill="#666">Afgerond</text>
<rect x="1381" y="594" width="38" height="10" fill="#ff6384"/>
<text x="1426" y="602" font-family="Liberation Sans" font-size="12" fill="#666">Geannuleerd</text>
</svg>
<div class="a th" style="left:27.5px;top:759px;">Nummer</div>
<div class="a th" style="left:118px;top:759px;">Categorie</div>
<div class="a th" style="left:222px;top:759px;">Type</div>
<div class="a th" style="left:393.5px;top:759px;">Onderwerp</div>
<div class="a th" style="left:812px;top:759px;">Status</div>
<div class="a th" style="left:954.5px;top:759px;">Indiener</div>
<div class="a th" style="left:1119px;top:759px;">Revisie</div>
<div class="a th" style="left:1199px;top:737px;width:90px;text-align:center">Maatregelen</div>
<div class="a th" style="left:1199px;top:759px;width:90px;text-align:center">Open / Totaal</div>
<div class="a th" style="left:1304.5px;top:759px;">Datum actief</div>
<div class="a th" style="left:1404.5px;top:737px;">Datum</div>
<div class="a th" style="left:1404.5px;top:759px;">gereed</div>
<svg class="a" style="left:1505px;top:752px" width="30" height="28"><path d="M4.6,13.3 H24.5 M14.5,3.7 V22.9" stroke="#1f4580" stroke-width="2.6"/></svg>
<div class="a row" style="top:783px;height:36px;background:#ebebeb"></div>
<div class="a td gray" style="left:27.5px;top:792px;">00003</div>
<div class="a td " style="left:118px;top:792px;">Meldingen</div>
<div class="a td " style="left:222px;top:792px;">Afwijkingen (NCR)</div>
<div class="a td gray" style="left:393.5px;top:792px;">Probleem met productieproces</div>
<div class="a badge b-o" style="left:812px;top:792px">Openstaand</div>
<div class="a td gray" style="left:954.5px;top:792px;">Stan H&uuml;ner</div>
<div class="a td gray" style="left:1199px;top:792px;width:90px;text-align:center">0 / 0</div>
<svg class="a" style="left:1505px;top:783px" width="30" height="30"><g transform="translate(5.8,25.8) rotate(-44)"><path d="M0.6,0 L5.5,-3.2 L21,-3.2 L21,3.2 L5.5,3.2 Z" fill="none" stroke="#1f4580" stroke-width="1.8" stroke-linejoin="round"/><path d="M20,-4.1 H21.8 Q25.6,-4.1 25.6,0 Q25.6,4.1 21.8,4.1 H20 Z" fill="#1f4580"/></g></svg>
<div class="a row" style="top:819px;height:32px;background:#fff"></div>
<div class="a td gray" style="left:27.5px;top:826px;">00005</div>
<div class="a td " style="left:118px;top:826px;">Meldingen</div>
<div class="a td " style="left:222px;top:826px;">Afwijkingen (NCR)</div>
<div class="a td gray" style="left:393.5px;top:826px;">Missende handtekening op PO document</div>
<div class="a badge b-o" style="left:812px;top:825px">Openstaand</div>
<div class="a td gray" style="left:954.5px;top:826px;">Stan H&uuml;ner</div>
<div class="a td gray" style="left:1199px;top:826px;width:90px;text-align:center">1 / 1</div>
<svg class="a" style="left:1505px;top:817px" width="30" height="30"><g transform="translate(5.8,25.8) rotate(-44)"><path d="M0.6,0 L5.5,-3.2 L21,-3.2 L21,3.2 L5.5,3.2 Z" fill="none" stroke="#1f4580" stroke-width="1.8" stroke-linejoin="round"/><path d="M20,-4.1 H21.8 Q25.6,-4.1 25.6,0 Q25.6,4.1 21.8,4.1 H20 Z" fill="#1f4580"/></g></svg>
<div class="a row" style="top:851px;height:34px;background:#ebebeb"></div>
<div class="a td green" style="left:27.5px;top:858px;">00007</div>
<div class="a td " style="left:118px;top:858px;">Meldingen</div>
<div class="a td " style="left:222px;top:858px;">Afwijkingen (NCR)</div>
<div class="a td green" style="left:393.5px;top:858px;">Deur sluit niet meer</div>
<div class="a badge b-a" style="left:812px;top:859px">Afgerond</div>
<div class="a td green" style="left:954.5px;top:858px;">Stan H&uuml;ner</div>
<div class="a td green" style="left:1199px;top:858px;width:90px;text-align:center">0 / 1</div>
<div class="a td green" style="left:1304.5px;top:858px;">13-05-2020</div>
<div class="a td green" style="left:1404.5px;top:858px;">13-05-2020</div>
<svg class="a" style="left:1505px;top:850px" width="30" height="30"><g transform="translate(5.8,25.8) rotate(-44)"><path d="M0.6,0 L5.5,-3.2 L21,-3.2 L21,3.2 L5.5,3.2 Z" fill="none" stroke="#1f4580" stroke-width="1.8" stroke-linejoin="round"/><path d="M20,-4.1 H21.8 Q25.6,-4.1 25.6,0 Q25.6,4.1 21.8,4.1 H20 Z" fill="#1f4580"/></g></svg>
<div class="a row" style="top:885px;height:33px;background:#fff"></div>
<div class="a td " style="left:27.5px;top:892px;">00009</div>
<div class="a td " style="left:118px;top:892px;">Meldingen</div>
<div class="a td " style="left:222px;top:892px;">Afwijkingen (NCR)</div>
<div class="a td " style="left:393.5px;top:892px;">Proces wijkt af van de norm</div>
<div class="a badge b-i" style="left:812px;top:892px">In behandeling</div>
<div class="a td " style="left:954.5px;top:892px;">Stan H&uuml;ner</div>
<div class="a td " style="left:1199px;top:892px;width:90px;text-align:center">0 / 0</div>
<div class="a td " style="left:1304.5px;top:892px;">25-09-2024</div>
<svg class="a" style="left:1505px;top:884px" width="30" height="30"><g transform="translate(5.8,25.8) rotate(-44)"><path d="M0.6,0 L5.5,-3.2 L21,-3.2 L21,3.2 L5.5,3.2 Z" fill="none" stroke="#1f4580" stroke-width="1.8" stroke-linejoin="round"/><path d="M20,-4.1 H21.8 Q25.6,-4.1 25.6,0 Q25.6,4.1 21.8,4.1 H20 Z" fill="#1f4580"/></g></svg>
<div class="a row" style="top:918px;height:34px;background:#ebebeb"></div>
<div class="a td gray" style="left:27.5px;top:926px;">00010</div>
<div class="a td " style="left:118px;top:926px;">Meldingen</div>
<div class="a td " style="left:222px;top:926px;">Afwijkingen (NCR)</div>
<div class="a td gray" style="left:393.5px;top:926px;">Verplichting vanuit Toolbox meeting</div>
<div class="a badge b-o" style="left:812px;top:926px">Openstaand</div>
<div class="a td gray" style="left:954.5px;top:926px;">Stan H&uuml;ner</div>
<div class="a td gray" style="left:1199px;top:926px;width:90px;text-align:center">0 / 0</div>
<svg class="a" style="left:1505px;top:917px" width="30" height="30"><g transform="translate(5.8,25.8) rotate(-44)"><path d="M0.6,0 L5.5,-3.2 L21,-3.2 L21,3.2 L5.5,3.2 Z" fill="none" stroke="#1f4580" stroke-width="1.8" stroke-linejoin="round"/><path d="M20,-4.1 H21.8 Q25.6,-4.1 25.6,0 Q25.6,4.1 21.8,4.1 H20 Z" fill="#1f4580"/></g></svg>
<div class="a row" style="top:952px;height:33px;background:#fff"></div>
<div class="a td gray" style="left:27.5px;top:959px;">00016</div>
<div class="a td " style="left:118px;top:959px;">Meldingen</div>
<div class="a td " style="left:222px;top:959px;">Afwijkingen (NCR)</div>
<div class="a td gray" style="left:393.5px;top:959px;">Er wordt teveel ingekocht.</div>
<div class="a badge b-o" style="left:812px;top:959px">Openstaand</div>
<div class="a td gray" style="left:954.5px;top:959px;">Stan H&uuml;ner</div>
<div class="a td gray" style="left:1199px;top:959px;width:90px;text-align:center">1 / 1</div>
<svg class="a" style="left:1505px;top:950px" width="30" height="30"><g transform="translate(5.8,25.8) rotate(-44)"><path d="M0.6,0 L5.5,-3.2 L21,-3.2 L21,3.2 L5.5,3.2 Z" fill="none" stroke="#1f4580" stroke-width="1.8" stroke-linejoin="round"/><path d="M20,-4.1 H21.8 Q25.6,-4.1 25.6,0 Q25.6,4.1 21.8,4.1 H20 Z" fill="#1f4580"/></g></svg>
</body></html>
